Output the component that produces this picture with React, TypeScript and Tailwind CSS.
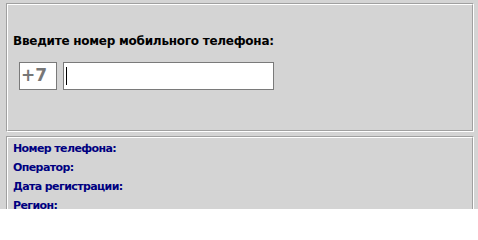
import React from "react";

function Groove({ className = "", children }: { className?: string; children?: React.ReactNode }) {
  return (
    <div className={"border-t border-l border-t-[#a0a0a0] border-l-[#a0a0a0] border-b border-r border-b-white border-r-white " + className}>
      <div className="h-full border-t border-l border-t-white border-l-white border-b border-r border-b-[#a0a0a0] border-r-[#a0a0a0]">
        {children}
      </div>
    </div>
  );
}

export default function App() {
  return (
    <div
      className="w-[478px] h-[209px] overflow-hidden bg-[#d4d4d4] pt-[3px] pl-[6px] pr-[4px] flex flex-col gap-[4px]"
      style={{ fontFamily: '"DejaVu Sans", Tahoma, Verdana, sans-serif' }}
    >
      <Groove className="h-[129px] shrink-0">
        <div className="pt-[28px] pl-[5px]">
          <div className="text-[12px] leading-[16px] font-bold text-black tracking-[-0.25px]">
            Введите номер мобильного телефона:
          </div>
          <div className="flex gap-[6px] mt-[13px] pl-[6px]">
            <div className="w-[38px] h-[28px] border border-[#7a7a7a] bg-white flex items-center pl-[1px] text-[17px] font-bold text-[#777777]">
              +7
            </div>
            <div className="w-[211px] h-[28px] border border-[#7a7a7a] bg-white flex items-center pl-[2px]">
              <div className="w-[1px] h-[18px] bg-black" />
            </div>
          </div>
        </div>
      </Groove>
      <Groove className="h-[100px] shrink-0">
        <div className="pl-[5px] pt-[1px] flex flex-col text-[11px] leading-[19px] font-bold text-[#000080] tracking-[-0.6px]">
          <div>Номер телефона:</div>
          <div>Оператор:</div>
          <div>Дата регистрации:</div>
          <div>Регион:</div>
        </div>
      </Groove>
    </div>
  );
}
